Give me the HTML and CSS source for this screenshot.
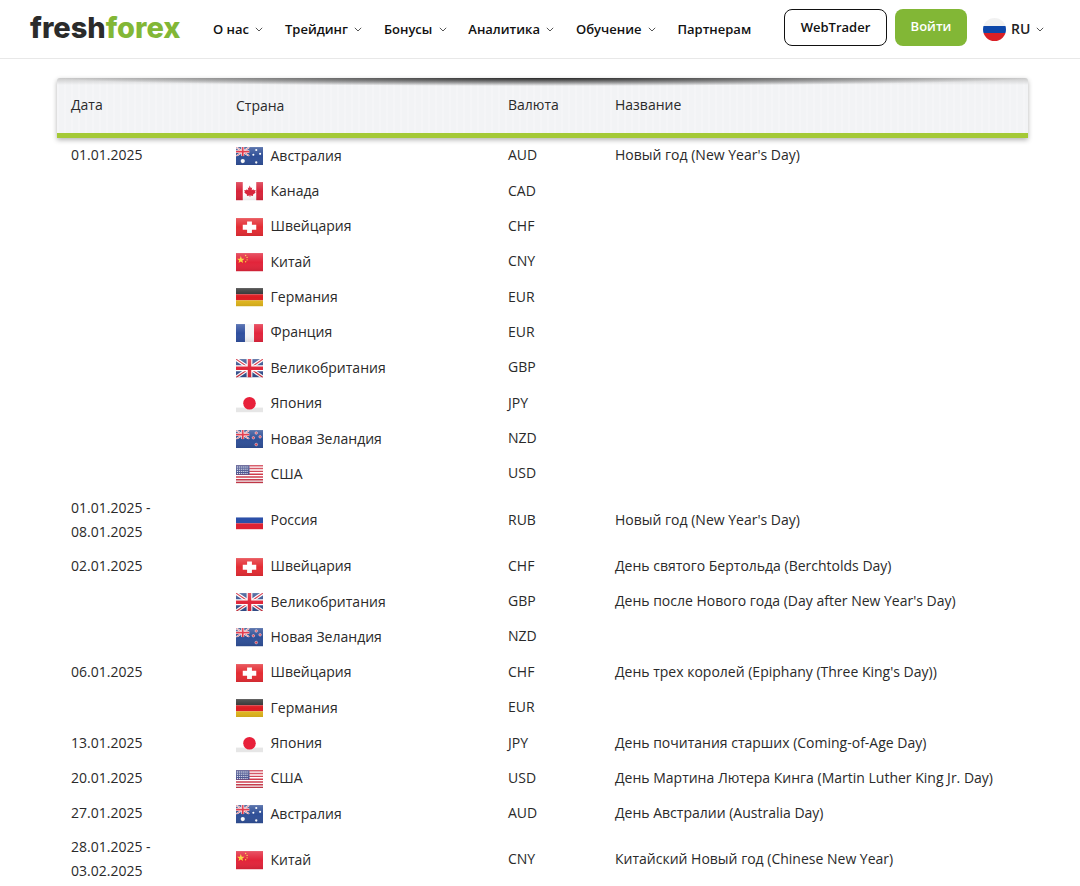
FILE: index.html
```html
<!DOCTYPE html>
<html lang="ru">
<head>
    <meta charset="UTF-8">
    <title>FreshForex</title>
    <link rel="stylesheet" href="styles.css">
</head>
<body>
    <svg class="defs" width="0" height="0" aria-hidden="true">
        <defs>
            <linearGradient id="gloss" x1="0" y1="0" x2="0" y2="1">
                <stop offset="0" stop-color="#fff" stop-opacity=".22"/>
                <stop offset=".5" stop-color="#fff" stop-opacity="0"/>
                <stop offset="1" stop-color="#000" stop-opacity=".1"/>
            </linearGradient>
            <symbol id="uj" viewBox="0 0 28 19">
                <rect width="28" height="19" fill="#34508f"/>
                <path d="M0 0L28 19M28 0L0 19" stroke="#fff" stroke-width="3.6"/>
                <path d="M0 0L28 19M28 0L0 19" stroke="#d3293b" stroke-width="1.2"/>
                <path d="M14 0V19M0 9.5H28" stroke="#fff" stroke-width="6"/>
                <path d="M14 0V19M0 9.5H28" stroke="#e0273a" stroke-width="3.6"/>
            </symbol>
            <symbol id="f-au" viewBox="0 0 28 19">
                <rect width="28" height="19" fill="#2f4f97"/>
                <use href="#uj" width="14" height="9.5"/>
                <g fill="#fff">
                    <circle cx="7" cy="14.5" r="2.2"/>
                    <circle cx="21" cy="3" r="1.1"/>
                    <circle cx="25" cy="7" r="1.1"/>
                    <circle cx="18" cy="8" r="1.1"/>
                    <circle cx="21" cy="16" r="1.2"/>
                </g>
                <rect width="28" height="19" fill="url(#gloss)"/>
            </symbol>
            <symbol id="f-nz" viewBox="0 0 28 19">
                <rect width="28" height="19" fill="#2f4f97"/>
                <use href="#uj" width="14" height="9.5"/>
                <g fill="#e0394a" stroke="#fff" stroke-width=".5">
                    <circle cx="21" cy="3" r="1.3"/>
                    <circle cx="25" cy="7" r="1.3"/>
                    <circle cx="18" cy="8" r="1.3"/>
                    <circle cx="21" cy="15" r="1.4"/>
                </g>
                <rect width="28" height="19" fill="url(#gloss)"/>
            </symbol>
            <symbol id="f-ca" viewBox="0 0 28 19">
                <rect width="28" height="19" fill="#fff"/>
                <rect width="7" height="19" fill="#d8243a"/>
                <rect x="21" width="7" height="19" fill="#d8243a"/>
                <path d="M14 3.5l1.5 2.6 1.3-.6-.5 3 1.700-1.200.5 1.200 2-.3-.7 2 .7.5-3 2.400.3 1.200-3-.4V15.500h-.6V13.900l-3 .4.3-1.200-3-2.400.7-.5-.7-2 2 .3.5-1.200 1.700 1.200-.5-3 1.300.6z" fill="#d8243a"/>
                <rect width="28" height="19" fill="url(#gloss)"/>
            </symbol>
            <symbol id="f-ch" viewBox="0 0 28 19">
                <rect width="28" height="19" fill="#e42c33"/>
                <path d="M11.500 3.500h5V7H21v5h-4.500v3.500h-5V12H7V7h4.500z" fill="#fff"/>
                <rect width="28" height="19" fill="url(#gloss)"/>
            </symbol>
            <symbol id="f-cn" viewBox="0 0 28 19">
                <rect width="28" height="19" fill="#e2243a"/>
                <path d="M5 3l1 2.800 2.900 0-2.300 1.800.8 2.800L5 8.800 2.600 10.400l.8-2.800L1.100 5.800l2.900 0z" fill="#f8d53a"/>
                <g fill="#f8d53a">
                    <circle cx="10" cy="2.500" r=".7"/>
                    <circle cx="11.500" cy="4.500" r=".7"/>
                    <circle cx="11.500" cy="7" r=".7"/>
                    <circle cx="10" cy="9" r=".7"/>
                </g>
                <rect width="28" height="19" fill="url(#gloss)"/>
            </symbol>
            <symbol id="f-de" viewBox="0 0 28 19">
                <rect width="28" height="6.400" fill="#2a2a2a"/>
                <rect y="6.400" width="28" height="6.300" fill="#dd1c22"/>
                <rect y="12.700" width="28" height="6.300" fill="#e2b71c"/>
                <rect width="28" height="19" fill="url(#gloss)"/>
            </symbol>
            <symbol id="f-fr" viewBox="0 0 28 19">
                <rect width="28" height="19" fill="#f4f4f6"/>
                <rect width="9.300" height="19" fill="#2f4f9f"/>
                <rect x="18.700" width="9.300" height="19" fill="#e2243c"/>
                <rect width="28" height="19" fill="url(#gloss)"/>
            </symbol>
            <symbol id="f-gb" viewBox="0 0 28 19">
                <use href="#uj" width="28" height="19"/>
                <rect width="28" height="19" fill="url(#gloss)"/>
            </symbol>
            <symbol id="f-jp" viewBox="0 0 28 19">
                <rect width="28" height="19" fill="#fff"/>
                <rect y="14" width="28" height="5" fill="#e6e6e6"/>
                <circle cx="14" cy="9.500" r="6.500" fill="#e8203a"/>
            </symbol>
            <symbol id="f-us" viewBox="0 0 28 19">
                <rect width="28" height="19" fill="#fff"/>
                <path d="M0 .7H28M0 3.600H28M0 6.500H28M0 9.400H28M0 12.300H28M0 15.200H28M0 18.100H28" stroke="#cf3b4c" stroke-width="1.500"/>
                <rect width="14" height="10" fill="#47528f"/>
                <path d="M1 2H13M1 4.300H13M1 6.600H13M1 8.800H13" stroke="#fff" stroke-width="1" stroke-dasharray="1 1"/>
                <rect width="28" height="19" fill="url(#gloss)"/>
            </symbol>
            <symbol id="f-ru" viewBox="0 0 28 19">
                <rect y="6.400" width="28" height="6.300" fill="#2b4fa8"/>
                <rect y="12.700" width="28" height="6.300" fill="#dd2233"/>
                <rect width="28" height="6.400" fill="#fff"/>
            </symbol>
            <symbol id="chev" viewBox="0 0 8 5">
                <path d="M.8.8L4 4l3.200-3.200" fill="none" stroke="#555" stroke-width="1"/>
            </symbol>
        </defs>
    </svg>

    <header class="topbar">
        <a class="logo"><span class="logo-fresh">fresh</span><span class="logo-forex">forex</span></a>
        <nav class="menu">
            <a class="menu-item">О нас <svg class="chev"><use href="#chev"/></svg></a>
            <a class="menu-item">Трейдинг <svg class="chev"><use href="#chev"/></svg></a>
            <a class="menu-item">Бонусы <svg class="chev"><use href="#chev"/></svg></a>
            <a class="menu-item">Аналитика <svg class="chev"><use href="#chev"/></svg></a>
            <a class="menu-item">Обучение <svg class="chev"><use href="#chev"/></svg></a>
            <a class="menu-item">Партнерам</a>
        </nav>
        <a class="btn btn-outline">WebTrader</a>
        <a class="btn btn-green">Войти</a>
        <div class="lang">
            <span class="lang-flag"></span>
            <span>RU</span>
            <svg class="chev"><use href="#chev"/></svg>
        </div>
    </header>

    <main class="holidays">
        <div class="row head">
            <div class="cell">Дата</div>
            <div class="cell head-country">Страна</div>
            <div class="cell">Валюта</div>
            <div class="cell">Название</div>
        </div>

        <div class="row"><div class="cell">01.01.2025</div><div class="cell country"><svg class="flag"><use href="#f-au"/></svg>Австралия</div><div class="cell">AUD</div><div class="cell">Новый год (New Year's Day)</div></div>
        <div class="row"><div class="cell"></div><div class="cell country"><svg class="flag"><use href="#f-ca"/></svg>Канада</div><div class="cell">CAD</div><div class="cell"></div></div>
        <div class="row"><div class="cell"></div><div class="cell country"><svg class="flag"><use href="#f-ch"/></svg>Швейцария</div><div class="cell">CHF</div><div class="cell"></div></div>
        <div class="row"><div class="cell"></div><div class="cell country"><svg class="flag"><use href="#f-cn"/></svg>Китай</div><div class="cell">CNY</div><div class="cell"></div></div>
        <div class="row"><div class="cell"></div><div class="cell country"><svg class="flag"><use href="#f-de"/></svg>Германия</div><div class="cell">EUR</div><div class="cell"></div></div>
        <div class="row"><div class="cell"></div><div class="cell country"><svg class="flag"><use href="#f-fr"/></svg>Франция</div><div class="cell">EUR</div><div class="cell"></div></div>
        <div class="row"><div class="cell"></div><div class="cell country"><svg class="flag"><use href="#f-gb"/></svg>Великобритания</div><div class="cell">GBP</div><div class="cell"></div></div>
        <div class="row"><div class="cell"></div><div class="cell country"><svg class="flag"><use href="#f-jp"/></svg>Япония</div><div class="cell">JPY</div><div class="cell"></div></div>
        <div class="row"><div class="cell"></div><div class="cell country"><svg class="flag"><use href="#f-nz"/></svg>Новая Зеландия</div><div class="cell">NZD</div><div class="cell"></div></div>
        <div class="row"><div class="cell"></div><div class="cell country"><svg class="flag"><use href="#f-us"/></svg>США</div><div class="cell">USD</div><div class="cell"></div></div>
        <div class="row"><div class="cell">01.01.2025 - 08.01.2025</div><div class="cell country"><svg class="flag"><use href="#f-ru"/></svg>Россия</div><div class="cell">RUB</div><div class="cell">Новый год (New Year's Day)</div></div>
        <div class="row"><div class="cell">02.01.2025</div><div class="cell country"><svg class="flag"><use href="#f-ch"/></svg>Швейцария</div><div class="cell">CHF</div><div class="cell">День святого Бертольда (Berchtolds Day)</div></div>
        <div class="row"><div class="cell"></div><div class="cell country"><svg class="flag"><use href="#f-gb"/></svg>Великобритания</div><div class="cell">GBP</div><div class="cell">День после Нового года (Day after New Year's Day)</div></div>
        <div class="row"><div class="cell"></div><div class="cell country"><svg class="flag"><use href="#f-nz"/></svg>Новая Зеландия</div><div class="cell">NZD</div><div class="cell"></div></div>
        <div class="row"><div class="cell">06.01.2025</div><div class="cell country"><svg class="flag"><use href="#f-ch"/></svg>Швейцария</div><div class="cell">CHF</div><div class="cell">День трех королей (Epiphany (Three King's Day))</div></div>
        <div class="row"><div class="cell"></div><div class="cell country"><svg class="flag"><use href="#f-de"/></svg>Германия</div><div class="cell">EUR</div><div class="cell"></div></div>
        <div class="row"><div class="cell">13.01.2025</div><div class="cell country"><svg class="flag"><use href="#f-jp"/></svg>Япония</div><div class="cell">JPY</div><div class="cell">День почитания старших (Coming-of-Age Day)</div></div>
        <div class="row"><div class="cell">20.01.2025</div><div class="cell country"><svg class="flag"><use href="#f-us"/></svg>США</div><div class="cell">USD</div><div class="cell">День Мартина Лютера Кинга (Martin Luther King Jr. Day)</div></div>
        <div class="row"><div class="cell">27.01.2025</div><div class="cell country"><svg class="flag"><use href="#f-au"/></svg>Австралия</div><div class="cell">AUD</div><div class="cell">День Австралии (Australia Day)</div></div>
        <div class="row"><div class="cell">28.01.2025 - 03.02.2025</div><div class="cell country"><svg class="flag"><use href="#f-cn"/></svg>Китай</div><div class="cell">CNY</div><div class="cell">Китайский Новый год (Chinese New Year)</div></div>
    </main>
</body>
</html>
```

FILE: styles.css
```css
body {
    margin: 0;
    font-family: "Open Sans", sans-serif;
    font-size: 14px;
    line-height: 24px;
    color: #2a2a2a;
    background: #fff;
    overflow: hidden;
}
.defs {
    position: absolute;
}

/* top bar */
.topbar {
    display: flex;
    align-items: center;
    height: 58px;
    padding-left: 30px;
    border-bottom: 1px solid #e8e8e8;
}
.logo {
    width: 150px;
    font-family: Inter, sans-serif;
    font-size: 29px;
    font-weight: 800;
    line-height: 30px;
    letter-spacing: 0;
    margin-top: -3px;
    white-space: nowrap;
}
.logo-fresh {
    color: #2b2b2b;
}
.logo-forex {
    color: #82b736;
}
.menu {
    display: flex;
    align-items: center;
    gap: 21.6px;
    margin-left: 33px;
    width: 571px;
}
.menu-item {
    font-size: 13px;
    font-weight: 600;
    color: #111;
    white-space: nowrap;
}
.chev {
    width: 8px;
    height: 5px;
    margin-left: 3px;
    vertical-align: 2px;
}
.btn {
    box-sizing: border-box;
    height: 37px;
    border-radius: 8px;
    font-size: 13px;
    font-weight: 600;
    line-height: 35px;
    text-align: center;
    margin-top: -4px;
}
.btn-outline {
    width: 103px;
    border: 1px solid #111;
    color: #111;
}
.btn-green {
    width: 72px;
    margin-left: 8px;
    background: #82b736;
    color: #fff;
}
.lang {
    display: flex;
    align-items: center;
    gap: 5px;
    margin-left: 16px;
    font-size: 14px;
    font-weight: 600;
    color: #222;
}
.lang .chev {
    margin-left: 1px;
}
.lang-flag {
    width: 23px;
    height: 23px;
    border-radius: 50%;
    background: linear-gradient(#f1f1f1 33%, #0d47a9 33%, #0d47a9 66%, #d92027 66%);
}

/* table */
.holidays {
    width: 971px;
    margin: 19px 0 0 57px;
}
.row {
    display: grid;
    grid-template-columns: 165px 272px 107px 1fr;
    align-items: center;
}
.cell {
    padding: 4px 14px 5px;
}
.head {
    align-items: start;
    height: 44px;
    padding-top: 11px;
    border-bottom: 5px solid #a4c936;
    border-radius: 3px 3px 0 0;
    background:
        radial-gradient(ellipse 50% 8px at 50% 0, rgba(30, 30, 30, .95), rgba(30, 30, 30, 0)) no-repeat,
        linear-gradient(#c9c9c9, rgba(201, 201, 201, 0) 7px) no-repeat,
        repeating-linear-gradient(90deg, rgba(255, 255, 255, .2) 0 2px, rgba(255, 255, 255, 0) 2px 7px),
        #f2f3f5;
    box-shadow: 0 2px 5px rgba(0, 0, 0, .3);
}
.head-country {
    padding-top: 5px;
}
.country {
    display: flex;
    align-items: center;
    min-height: 26.36px;
    padding: 4.5px 14px;
}
.flag {
    flex: none;
    width: 27px;
    height: 18.5px;
    margin: 1px 7.5px 0 0;
}
```
